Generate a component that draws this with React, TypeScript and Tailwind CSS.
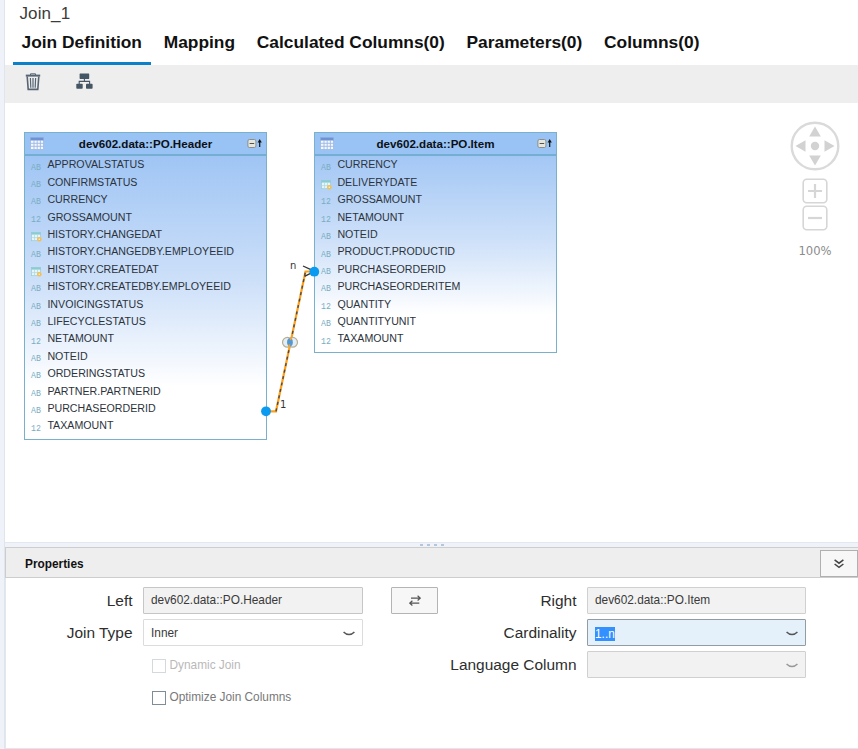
import React from 'react';

type Kind = 'AB' | '12' | 'date';
type Column = [Kind, string];

const headerColumns: Column[] = [
  ['AB', 'APPROVALSTATUS'],
  ['AB', 'CONFIRMSTATUS'],
  ['AB', 'CURRENCY'],
  ['12', 'GROSSAMOUNT'],
  ['date', 'HISTORY.CHANGEDAT'],
  ['AB', 'HISTORY.CHANGEDBY.EMPLOYEEID'],
  ['date', 'HISTORY.CREATEDAT'],
  ['AB', 'HISTORY.CREATEDBY.EMPLOYEEID'],
  ['AB', 'INVOICINGSTATUS'],
  ['AB', 'LIFECYCLESTATUS'],
  ['12', 'NETAMOUNT'],
  ['AB', 'NOTEID'],
  ['AB', 'ORDERINGSTATUS'],
  ['AB', 'PARTNER.PARTNERID'],
  ['AB', 'PURCHASEORDERID'],
  ['12', 'TAXAMOUNT'],
];

const itemColumns: Column[] = [
  ['AB', 'CURRENCY'],
  ['date', 'DELIVERYDATE'],
  ['12', 'GROSSAMOUNT'],
  ['12', 'NETAMOUNT'],
  ['AB', 'NOTEID'],
  ['AB', 'PRODUCT.PRODUCTID'],
  ['AB', 'PURCHASEORDERID'],
  ['AB', 'PURCHASEORDERITEM'],
  ['12', 'QUANTITY'],
  ['AB', 'QUANTITYUNIT'],
  ['12', 'TAXAMOUNT'],
];

const tabs = ['Join Definition', 'Mapping', 'Calculated Columns(0)', 'Parameters(0)', 'Columns(0)'];

function TrashIcon() {
  return (
    <svg width="16" height="18" viewBox="0 0 16 18" fill="none" stroke="#566574">
      <path d="M5.5 2V.8h5V2" strokeWidth="1" />
      <path d="M.8 2.6h14.4" strokeWidth="2" />
      <path d="M2.2 3.5l1 12.9h9.6l1-12.9" strokeWidth="1.6" />
      <path d="M5.4 5l.4 9.8M8 5v9.8M10.6 5l-.4 9.8" strokeWidth="1.2" />
    </svg>
  );
}

function HierarchyIcon() {
  return (
    <svg width="17" height="17" viewBox="0 0 17 17" fill="#445565">
      <rect x="3.6" y="0.5" width="9.6" height="5.4" rx="0.6" />
      <path d="M8.4 5.5v3M3.2 11.5V8.4h10.4v3.1" fill="none" stroke="#445565" strokeWidth="1.1" />
      <rect x="0.3" y="10.8" width="6.4" height="5" rx="0.8" />
      <rect x="10" y="10.8" width="6.6" height="5" rx="0.8" />
    </svg>
  );
}

function TableIcon() {
  return (
    <svg width="14" height="13" viewBox="0 0 14 13">
      <rect x="0.5" y="0.5" width="13" height="12" fill="#f4f8ff" stroke="#9db8e2" strokeWidth="0.8" />
      <rect x="0.5" y="0.5" width="13" height="3" fill="#6d93d4" />
      <path d="M.5 6.3h13M.5 9.3h13M4 3v9.5M7.2 3v9.5M10.4 3v9.5" stroke="#9db8e2" strokeWidth="0.9" />
    </svg>
  );
}

function KindIcon({ kind }: { kind: Kind }) {
  if (kind === 'date') {
    return (
      <svg width="11" height="10" viewBox="0 0 11 10">
        <rect x="0.5" y="0.5" width="9" height="8.2" fill="#e6f6f8" stroke="#96cbd3" strokeWidth="0.7" />
        <rect x="0.3" y="0.3" width="9.4" height="2.3" fill="#8bcbd3" />
        <path d="M3.5 2.6v6M6.5 2.6v6M.5 5.6h9" stroke="#a9d8de" strokeWidth="0.7" />
        <circle cx="8.3" cy="7.3" r="2.3" fill="#f3bf55" />
        <circle cx="8.3" cy="7.3" r="0.8" fill="#fff3c4" />
      </svg>
    );
  }
  return <span className="font-['Liberation_Mono',monospace] text-[8.2px] leading-none text-[#78adc2]">{kind}</span>;
}

function TableNode({ title, columns, place }: { title: string; columns: Column[]; place: string }) {
  return (
    <div
      className={`absolute w-[243px] border-[1.5px] border-[#79b0cc] bg-[linear-gradient(to_bottom,#97c0f4_0%,#a8caf5_15%,#cfe1f9_50%,#ffffff_83%)] ${place}`}
    >
      <div className="flex h-[23px] items-center border-b-2 border-[#74afd3] bg-[#98c3f4] pr-[3px] pl-[5px]">
        <TableIcon />
        <div className="flex-1 pl-[1px] text-center text-[11.6px] font-bold text-[#0c1016]">{title}</div>
        <svg width="16" height="11" viewBox="0 0 16 11">
          <rect x="0.9" y="1.5" width="8" height="8" rx="1.5" fill="#e4e6e2" stroke="#8e8e88" />
          <path d="M2.6 5.5h4.6" stroke="#55534e" />
          <path d="M12.7 9V3" stroke="#111" strokeWidth="1.2" />
          <path d="M10.6 4.6L12.7 1l2.1 3.6z" fill="#111" />
        </svg>
      </div>
      {columns.map(([kind, name]) => (
        <div key={name} className="flex h-[17.42px] items-center pl-[6.5px]">
          <div className="flex w-[16.4px] translate-y-[3px] items-center">
            <KindIcon kind={kind} />
          </div>
          <div className="text-[10.65px] leading-none whitespace-nowrap text-[#2c333b]">{name}</div>
        </div>
      ))}
    </div>
  );
}

function Connector() {
  return (
    <svg className="absolute top-0 left-0" width="600" height="430" viewBox="0 103 600 430" fill="none">
      <path d="M266 411.3H276L305.5 271.5H314" stroke="#ff9f1a" strokeWidth="2.2" />
      <path d="M276 411.3L305.5 271.5" stroke="#444c55" strokeWidth="1.4" strokeDasharray="3 3.6" />
      <path d="M303 266l9 4.2M304.5 276.3l8-4" stroke="#333" strokeWidth="1.3" />
      <circle cx="266" cy="411.3" r="4.9" fill="#0a9af0" />
      <circle cx="314.3" cy="271.7" r="4.9" fill="#0a9af0" />
      <circle cx="287.4" cy="342.3" r="4.9" fill="#dceaf6" fillOpacity=".85" stroke="#b7ae91" strokeWidth="1.2" />
      <circle cx="292.6" cy="342.3" r="4.9" fill="#dceaf6" fillOpacity=".85" stroke="#b7ae91" strokeWidth="1.2" />
      <ellipse cx="290" cy="342.3" rx="2.8" ry="4.1" fill="#5597d3" />
      <path d="M289 347L289.6 344.4M290.5 340L291 337.6" stroke="#ff9f1a" strokeWidth="1.6" />
    </svg>
  );
}

function ZoomControls() {
  return (
    <div className="absolute top-[18px] left-[790px] flex w-[50px] flex-col items-center">
      <svg width="50" height="50" viewBox="0 0 50 50" fill="#d2d2d2">
        <circle cx="25" cy="25" r="23.3" fill="none" stroke="#dadada" strokeWidth="2.4" />
        <circle cx="25" cy="25" r="4.2" />
        <path d="M25 5.5l5.8 10h-11.6zM25 44.5l5.8-10h-11.6zM5.5 25l10-5.8v11.6zM44.5 25l-10-5.8v11.6z" />
      </svg>
      <svg className="mt-[7px]" width="26" height="53" viewBox="0 0 26 53" fill="none" stroke="#d6d6d6">
        <rect x="1.2" y="1.2" width="23.6" height="23.6" rx="3.5" strokeWidth="1.6" />
        <path d="M6 13h14M13 6v14" strokeWidth="2.2" />
        <rect x="1.2" y="28.2" width="23.6" height="23.6" rx="3.5" strokeWidth="1.6" />
        <path d="M6 40h14" strokeWidth="2.2" />
      </svg>
      <div className="mt-[12px] font-['DejaVu_Sans',sans-serif] text-[11.6px] leading-[16px] text-[#8b8b8b]">100%</div>
    </div>
  );
}

function Chevron({ color }: { color: string }) {
  return (
    <svg className="mt-[2px]" width="12" height="5" viewBox="0 0 12 5" fill="none" stroke={color} strokeWidth="1.5">
      <path d="M.6 .9Q3 3.4 6 3.4T11.4 .9" />
    </svg>
  );
}

function Label({ children }: { children: React.ReactNode }) {
  return <div className="h-[27px] text-right text-[15.45px] leading-[27px] text-[#2e2e2e]">{children}</div>;
}

const field = 'flex h-[27px] items-center justify-between rounded-[1px] border pr-[7px] pl-[7px] text-[11.85px] text-[#3a3a3a]';

export default function App() {
  return (
    <div className="flex h-[749px] w-[858px] overflow-hidden bg-white font-['Liberation_Sans',Arial,sans-serif]">
      <div className="w-[5px] shrink-0 border-r border-[#dfe5ee] bg-[#eff3f9]" />
      <div className="flex min-w-0 flex-1 flex-col">
        <div className="h-[26px] pl-[14.5px] text-[17px] leading-[27px] tracking-[0.1px] text-[#3c3c3c]">
          Join_1
        </div>
        <div className="flex h-[39px] gap-[21.8px] pl-[8px]">
          {tabs.map((tab, i) => (
            <div
              key={tab}
              className={
                i === 0
                  ? '-mr-[9px] border-b-[3px] border-[#0a81c8] pr-[9px] pl-[8.5px] text-[17.35px] leading-[33px] font-bold whitespace-nowrap text-[#111]'
                  : 'text-[17.35px] leading-[33px] font-bold whitespace-nowrap text-[#111]'
              }
            >
              {tab}
            </div>
          ))}
        </div>
        <div className="flex h-[38px] items-start gap-[35px] bg-[#eeeeee] pt-[8px] pl-[20px]">
          <TrashIcon />
          <HierarchyIcon />
        </div>

        <div className="relative -ml-[5px] h-[439px]">
          <TableNode title="dev602.data::PO.Header" columns={headerColumns} place="left-[23.5px] top-[29px] h-[308px]" />
          <TableNode title="dev602.data::PO.Item" columns={itemColumns} place="left-[313.5px] top-[29px] h-[221px]" />
          <Connector />
          <div className="absolute top-[157px] left-[290px] font-['DejaVu_Sans',sans-serif] text-[10px] leading-[12px] text-[#333]">n</div>
          <div className="absolute top-[296px] left-[280px] font-['DejaVu_Sans',sans-serif] text-[10px] leading-[12px] text-[#333]">1</div>
          <ZoomControls />
          <div className="absolute top-0 left-0 h-full w-[5px] border-r border-[#dfe5ee] bg-[#eff3f9]" />
        </div>

        <div className="flex h-[5px] items-center justify-center gap-[4px] border-t border-[#e3e8f0] bg-[#eff3f9]">
          <i className="h-[2px] w-[3px] bg-[#b3c6da]" />
          <i className="h-[2px] w-[3px] bg-[#b3c6da]" />
          <i className="h-[2px] w-[3px] bg-[#b3c6da]" />
          <i className="h-[2px] w-[3px] bg-[#b3c6da]" />
        </div>
        <div className="flex h-[31px] items-center justify-between border-t border-b border-l border-[#cdcdcd] bg-[#eeeeee] pl-[19px]">
          <div className="pt-[5px] text-[11.85px] font-bold text-[#111]">Properties</div>
          <div className="mt-[2px] flex h-[27px] w-[38px] items-center justify-center border border-[#b0b0b0] bg-[#f7f7f7]">
            <svg width="10" height="10" viewBox="0 0 10 10" fill="none" stroke="#444" strokeWidth="1.5">
              <path d="M.6 .8L5 4.2L9.4 .8M.6 5L5 8.4L9.4 5" />
            </svg>
          </div>
        </div>

        <div className="flex flex-1 border-b border-l border-[#e2e6ee] pt-[9px]">
          <div className="flex w-[126.5px] flex-col gap-[5px]">
            <Label>Left</Label>
            <Label>Join Type</Label>
          </div>
          <div className="ml-[10.5px] flex w-[220px] flex-col gap-[5px]">
            <div className={`${field} border-[#c6c6c6] bg-[#f2f2f2]`}>
              <span className="pt-[1px]">dev602.data::PO.Header</span>
            </div>
            <div className={`${field} border-[#dcdcdc] bg-white`}>
              <span className="pt-[2px]">Inner</span>
              <Chevron color="#555" />
            </div>
            <label className="flex h-[27px] items-center gap-[4px] pt-[3px] pl-[8.5px] text-[11.85px] text-[#b9b9b9]">
              <span className="size-[14px] border border-[#d3d9dd]" />
              Dynamic Join
            </label>
            <label className="flex h-[27px] items-center gap-[4px] pt-[3px] pl-[8.5px] text-[11.85px] text-[#787878]">
              <span className="size-[14px] border border-[#7f8d98]" />
              Optimize Join Columns
            </label>
          </div>
          <div className="ml-[28px] flex h-[27px] w-[47px] items-center justify-center rounded-[1px] border border-[#b4b4b4] bg-[#f7f7f7]">
            <svg width="12" height="11" viewBox="0 0 12 11" fill="none" stroke="#555" strokeWidth="1.2">
              <path d="M2 3.1h9M8.6.7l2.6 2.4-2.6 2.4M10.3 8.1H1M3.4 5.7L.8 8.1l2.6 2.4" />
            </svg>
          </div>
          <div className="flex w-[138.5px] flex-col gap-[5px]">
            <Label>Right</Label>
            <Label>Cardinality</Label>
            <Label>Language Column</Label>
          </div>
          <div className="ml-[10.5px] flex w-[219px] flex-col gap-[5px]">
            <div className={`${field} border-[#d0d0d0] bg-[#f2f2f2]`}>
              <span className="pt-[1px]">dev602.data::PO.Item</span>
            </div>
            <div className={`${field} border-[#929da3] bg-[#e5f1fa]`}>
              <span className="mt-[2px] bg-[#3390ff] leading-[14px] text-white">1..n</span>
              <Chevron color="#555" />
            </div>
            <div className={`${field} border-[#d0d0d0] bg-[#f2f2f2]`}>
              <span />
              <Chevron color="#999" />
            </div>
          </div>
        </div>
      </div>
    </div>
  );
}
